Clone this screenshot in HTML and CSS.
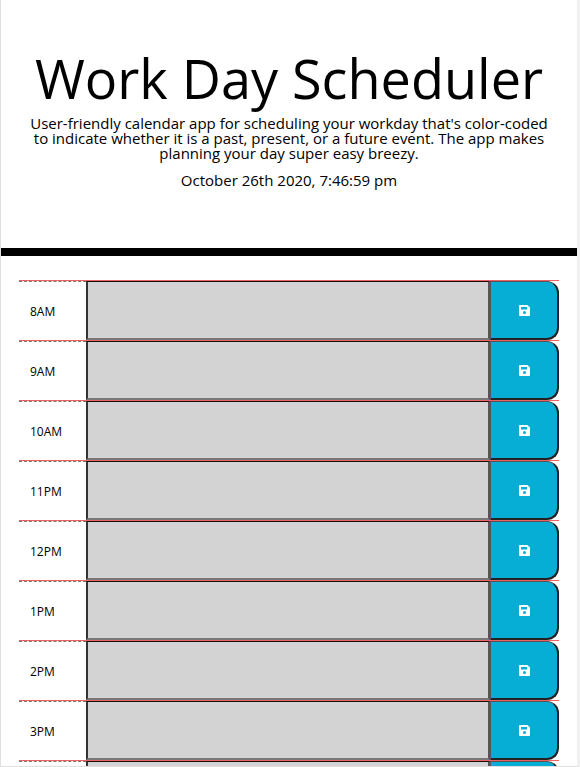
FILE: index.html
```html
<!DOCTYPE html>
<html lang="en">
<head>
<meta charset="utf-8">
<meta name="viewport" content="width=device-width, initial-scale=1">
<title>Work Day Scheduler</title>
<link rel="stylesheet" href="styles.css">
</head>
<body>
<svg class="sprite">
  <symbol id="save" viewBox="0 0 11 11">
    <path fill-rule="evenodd" d="M1 0H8.500L11 2.500V10a1 1 0 0 1-1 1H1a1 1 0 0 1-1-1V1a1 1 0 0 1 1-1ZM2 2V4.500H8V2ZM5.500 6a1.500 1.500 0 1 0 0 3a1.500 1.500 0 0 0 0-3Z"/>
  </symbol>
</svg>
<div class="page">
  <header class="hero">
    <h1 class="title">Work Day Scheduler</h1>
    <p class="lead">User-friendly calendar app for scheduling your workday that's color-coded to indicate whether it is a past, present, or a future event. The app makes planning your day super easy breezy.</p>
    <p class="today">October 26th 2020, 7:46:59 pm</p>
  </header>
  <main class="schedule">
    <div class="slot"><label class="hour" for="t8">8AM</label><textarea class="entry" id="t8"></textarea><button class="save" aria-label="Save 8AM"><svg class="icon"><use href="#save"/></svg></button></div>
    <div class="slot"><label class="hour" for="t9">9AM</label><textarea class="entry" id="t9"></textarea><button class="save" aria-label="Save 9AM"><svg class="icon"><use href="#save"/></svg></button></div>
    <div class="slot"><label class="hour" for="t10">10AM</label><textarea class="entry" id="t10"></textarea><button class="save" aria-label="Save 10AM"><svg class="icon"><use href="#save"/></svg></button></div>
    <div class="slot"><label class="hour" for="t11">11PM</label><textarea class="entry" id="t11"></textarea><button class="save" aria-label="Save 11PM"><svg class="icon"><use href="#save"/></svg></button></div>
    <div class="slot"><label class="hour" for="t12">12PM</label><textarea class="entry" id="t12"></textarea><button class="save" aria-label="Save 12PM"><svg class="icon"><use href="#save"/></svg></button></div>
    <div class="slot"><label class="hour" for="t13">1PM</label><textarea class="entry" id="t13"></textarea><button class="save" aria-label="Save 1PM"><svg class="icon"><use href="#save"/></svg></button></div>
    <div class="slot"><label class="hour" for="t14">2PM</label><textarea class="entry" id="t14"></textarea><button class="save" aria-label="Save 2PM"><svg class="icon"><use href="#save"/></svg></button></div>
    <div class="slot"><label class="hour" for="t15">3PM</label><textarea class="entry" id="t15"></textarea><button class="save" aria-label="Save 3PM"><svg class="icon"><use href="#save"/></svg></button></div>
    <div class="slot"><label class="hour" for="t16"></label><textarea class="entry" id="t16"></textarea><button class="save" aria-label="Save"></button></div>
  </main>
</div>
</body>
</html>
```
FILE: styles.css
```css
* {
  box-sizing: border-box;
}

body {
  margin: 0;
  background: #fff;
  color: #000;
  font-family: "Open Sans", "Liberation Sans", sans-serif;
  font-size: 16px;
  line-height: 1;
}

.sprite {
  display: none;
}

.page {
  height: 100vh;
  overflow: hidden;
  border: 1px solid #e0e0e0;
  border-top: 0;
  border-right: 3px solid #f0f0f0;
}

.hero {
  padding: 46px 24px 48px;
  border-bottom: 8px solid #000;
  text-align: center;
}

.title {
  margin: 0 0 6px;
  font-size: 54px;
  font-weight: 400;
  line-height: 64px;
}

.lead,
.today {
  margin: 0 0 12px;
  font-size: 15px;
  font-weight: 400;
  line-height: 15px;
}

.schedule {
  padding: 24px 18px 0;
}

.slot {
  display: grid;
  grid-template-columns: 67px 1fr 69px;
  height: 60px;
  border-top: 1px solid #f06060;
}

.hour {
  display: flex;
  align-items: center;
  padding: 2px 0 0 11px;
  border-top: 1px dashed #777;
  font-size: 12px;
}

.entry {
  width: 100%;
  height: 100%;
  margin: 0;
  padding: 8px;
  border: 2px solid #333;
  border-top: 1px solid #111;
  border-right-color: #555;
  border-bottom-color: #777;
  border-radius: 0;
  background: #d3d3d3;
  font: inherit;
  resize: none;
}

.save {
  display: flex;
  align-items: center;
  justify-content: center;
  padding: 0;
  border: 2px solid #222;
  border-top: 1px solid #555;
  border-left: 1px solid #555;
  border-radius: 0 12px 12px 0;
  background: #06aed5;
  color: #fff;
}

.icon {
  width: 11px;
  height: 11px;
  fill: currentColor;
}
```
